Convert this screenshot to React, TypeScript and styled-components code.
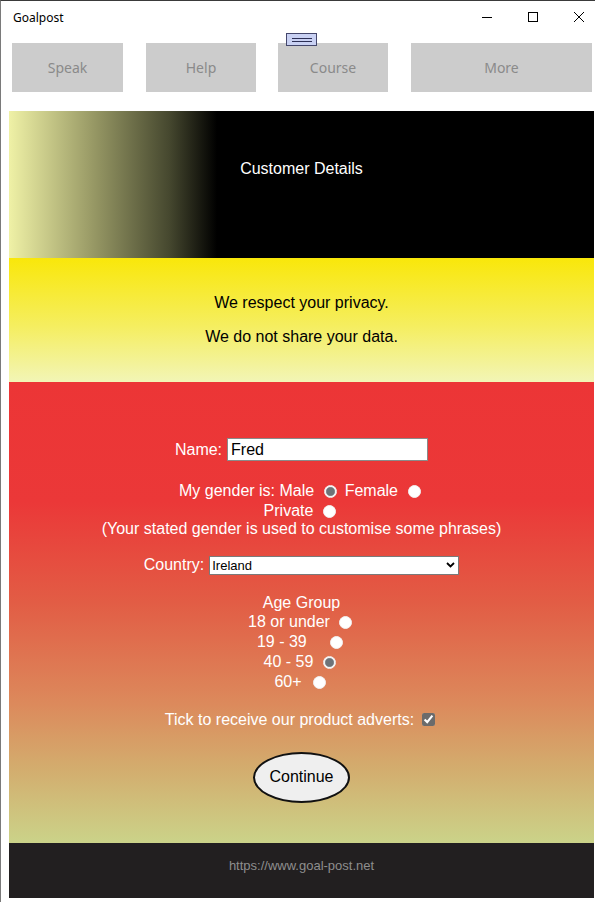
import React from "react";
import styled, { createGlobalStyle } from "styled-components";

const Global = createGlobalStyle`
  html, body { margin: 0; padding: 0; background: #fff; }
  body { font-family: "Liberation Sans", Arial, sans-serif; }
  * { box-sizing: border-box; }
`;

const Window = styled.div`
  position: relative;
  width: 595px;
  height: 902px;
  display: flex;
  flex-direction: column;
  border-top: 1px solid #3a3a3a;
  border-left: 1px solid #7a7a7a;
  background: #fff;
  overflow: hidden;
`;

const TitleBar = styled.div`
  height: 32px;
  display: flex;
  align-items: center;
  justify-content: space-between;
  padding: 0 11px 0 12px;
`;

const Title = styled.span`
  font-family: "Noto Sans", "Segoe UI", sans-serif;
  font-size: 12px;
  color: #000;
`;

const Controls = styled.div`
  display: flex;
  align-items: center;
  gap: 36px;
`;

const Handle = styled.div`
  position: absolute;
  left: 285px;
  top: 32px;
  width: 31px;
  height: 13px;
  background: #c9d1f3;
  border: 1px solid #44476c;
  display: flex;
  flex-direction: column;
  justify-content: center;
  align-items: center;
  gap: 2px;
`;

const HandleLine = styled.span`
  display: block;
  width: 20px;
  height: 1px;
  background: #2c2f55;
`;

const Body = styled.div`
  flex: 1;
  display: flex;
  flex-direction: column;
  padding: 0 1px 0 8px;
`;

const Toolbar = styled.div`
  display: flex;
  margin-top: 10px;
  padding-left: 3px;
  height: 49px;
`;

const ToolButton = styled.button<{ $w: number; $gap: number }>`
  width: ${(p) => p.$w}px;
  margin-left: ${(p) => p.$gap}px;
  height: 49px;
  border: none;
  background: #cccccc;
  color: #8a8a8a;
  font-family: "Noto Sans", "Segoe UI", sans-serif;
  font-size: 14px;
  padding: 0;
`;

const Header = styled.div`
  margin-top: 19px;
  height: 147px;
  background: linear-gradient(to right, #eff1a6 0px, #9c9d68 80px, #46482f 160px, #000 208px, #000 100%);
  color: #fff;
  font-size: 16px;
  text-align: center;
  padding-top: 49px;
  line-height: 18.4px;
`;

const Privacy = styled.div`
  height: 124px;
  background: linear-gradient(to bottom, #f9e70a 0%, #f5ee60 55%, #f2f5b6 100%);
  text-align: center;
  font-size: 16px;
  line-height: 18.4px;
  padding-top: 20px;
  color: #000;
`;

const Para = styled.p`
  margin: 16px 0;
`;

const Form = styled.div`
  height: 461px;
  background: linear-gradient(to bottom, #ec3536 0%, #eb3838 26%, #e25d45 48%, #dc8a5c 70%, #d3ad6e 84%, #cbd389 100%);
  color: #fff;
  font-size: 16px;
  display: flex;
  flex-direction: column;
  align-items: center;
  padding-top: 56px;
`;

const Row = styled.div<{ $mt?: number; $h?: number }>`
  display: flex;
  align-items: center;
  justify-content: center;
  margin-top: ${(p) => p.$mt ?? 0}px;
  height: ${(p) => p.$h ?? 18.4}px;
  white-space: pre;
`;

const TextInput = styled.input`
  width: 201px;
  height: 23px;
  margin-left: 5px;
  border: 1px solid #8a8a8a;
  background: #fff;
  font-family: "Liberation Sans", Arial, sans-serif;
  font-size: 16px;
  color: #000;
  padding: 0 3px;
  outline: none;
`;

const Radio = styled.input.attrs({ type: "radio" })<{ $ml?: number }>`
  appearance: none;
  flex: none;
  width: 13px;
  height: 13px;
  margin: 1px 3px 0 ${(p) => p.$ml ?? 10}px;
  border-radius: 50%;
  background: #fff;
  border: 1px solid #f2f2f2;
  &:checked {
    background: radial-gradient(circle, #6e7378 0 3.6px, #8a8f94 4.2px, #f4f4f4 5px);
  }
`;

const SelectWrap = styled.span`
  position: relative;
  display: inline-block;
  margin-left: 5px;
  width: 250px;
  height: 19px;
`;

const Select = styled.select`
  appearance: none;
  width: 250px;
  height: 19px;
  border: 1px solid #7a7a7a;
  background: #fff;
  font-family: "Liberation Sans", Arial, sans-serif;
  font-size: 13px;
  color: #000;
  padding: 0 0 0 2px;
  border-radius: 0;
  outline: none;
`;

const Chevron = styled.svg`
  position: absolute;
  right: 4px;
  top: 6px;
  pointer-events: none;
`;

const Check = styled.input.attrs({ type: "checkbox" })`
  width: 13px;
  height: 13px;
  margin: 0 3px 0 8px;
  accent-color: #6b6b6b;
`;

const ContinueButton = styled.button`
  margin-top: 22px;
  width: 97px;
  height: 51px;
  border-radius: 50%;
  border: 2px solid #111;
  background: #efefef;
  font-family: "Liberation Sans", Arial, sans-serif;
  font-size: 16px;
  color: #000;
  padding: 0;
`;

const Footer = styled.div`
  height: 55px;
  background: #221f20;
  color: #8e8e8e;
  font-size: 13px;
  text-align: center;
  padding-top: 15px;
`;

const MinIcon = () => (
  <svg width="10" height="10" viewBox="0 0 10 10">
    <line x1="0" y1="5.5" x2="10" y2="5.5" stroke="#000" strokeWidth="1" />
  </svg>
);
const MaxIcon = () => (
  <svg width="10" height="10" viewBox="0 0 10 10">
    <rect x="0.5" y="0.5" width="9" height="9" fill="none" stroke="#000" strokeWidth="1" />
  </svg>
);
const CloseIcon = () => (
  <svg width="10" height="10" viewBox="0 0 10 10">
    <path d="M0 0 L10 10 M10 0 L0 10" stroke="#000" strokeWidth="1" />
  </svg>
);

export default function App() {
  return (
    <>
      <Global />
      <Window>
        <TitleBar>
          <Title>Goalpost</Title>
          <Controls>
            <MinIcon />
            <MaxIcon />
            <CloseIcon />
          </Controls>
        </TitleBar>
        <Handle>
          <HandleLine />
          <HandleLine />
        </Handle>
        <Body>
          <Toolbar>
            <ToolButton $w={111} $gap={0}>Speak</ToolButton>
            <ToolButton $w={110} $gap={23}>Help</ToolButton>
            <ToolButton $w={110} $gap={22}>Course</ToolButton>
            <ToolButton $w={181} $gap={23}>More</ToolButton>
          </Toolbar>
          <Header>Customer Details</Header>
          <Privacy>
            <Para>We respect your privacy.</Para>
            <Para>We do not share your data.</Para>
          </Privacy>
          <Form>
            <Row $h={23}>
              Name:
              <TextInput defaultValue="Fred" />
            </Row>
            <Row $mt={20} $h={20}>
              My gender is: Male
              <Radio name="gender" defaultChecked $ml={10} />
              {" Female"}
              <Radio name="gender" $ml={10} />
            </Row>
            <Row $h={19}>
              Private
              <Radio name="gender" $ml={10} />
            </Row>
            <Row>(Your stated gender is used to customise some phrases)</Row>
            <Row $mt={17} $h={20}>
              Country:
              <SelectWrap>
                <Select defaultValue="Ireland">
                  <option>Ireland</option>
                  <option>United Kingdom</option>
                  <option>France</option>
                </Select>
                <Chevron width="9" height="6" viewBox="0 0 9 6">
                  <path d="M1 1 L4.5 4.5 L8 1" fill="none" stroke="#000" strokeWidth="1.8" />
                </Chevron>
              </SelectWrap>
            </Row>
            <Row $mt={18}>Age Group</Row>
            <Row $h={20}>
              18 or under
              <Radio name="age" $ml={9} />
            </Row>
            <Row $h={20}>
              {"19 - 39   "}
              <Radio name="age" $ml={10} />
            </Row>
            <Row $h={20}>
              40 - 59
              <Radio name="age" defaultChecked $ml={10} />
            </Row>
            <Row $h={20}>
              60+
              <Radio name="age" $ml={11} />
            </Row>
            <Row $mt={18} $h={20}>
              Tick to receive our product adverts:
              <Check defaultChecked />
            </Row>
            <ContinueButton>Continue</ContinueButton>
          </Form>
          <Footer>https://www.goal-post.net</Footer>
        </Body>
      </Window>
    </>
  );
}
